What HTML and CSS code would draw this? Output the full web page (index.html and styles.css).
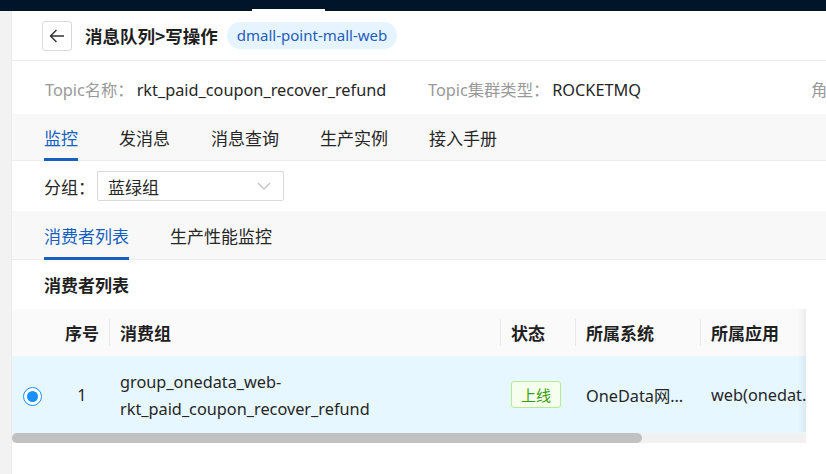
FILE: index.html
```html
<!DOCTYPE html>
<html lang="zh-CN">
<head>
<meta charset="utf-8">
<title>消息队列</title>
<link rel="stylesheet" href="styles.css">
</head>
<body>
<div class="topbar"><span class="topbar-notch"></span></div>
<div class="layout">
  <aside class="side"></aside>
  <main class="main">
    <header class="header">
      <button class="back" aria-label="返回">
        <svg width="16" height="14" viewBox="0 0 16 14"><path d="M15 7H1.5M7.5 1L1.5 7l6 6" fill="none" stroke="#333" stroke-width="1.4"/></svg>
      </button>
      <h1 class="title">消息队列&gt;写操作</h1>
      <span class="app-tag">dmall-point-mall-web</span>
    </header>
    <section class="info">
      <span class="info-item"><span class="label">Topic名称：</span><span class="value">rkt_paid_coupon_recover_refund</span></span>
      <span class="info-item"><span class="label">Topic集群类型：</span><span class="value">ROCKETMQ</span></span>
      <span class="info-item"><span class="label">角色：</span><span class="value">负责人</span></span>
    </section>
    <nav class="tabs">
      <span class="tab active">监控</span>
      <span class="tab">发消息</span>
      <span class="tab">消息查询</span>
      <span class="tab">生产实例</span>
      <span class="tab">接入手册</span>
    </nav>
    <div class="group-row">
      <span class="group-label">分组：</span>
      <div class="select">
        <span>蓝绿组</span>
        <svg width="14" height="8" viewBox="0 0 14 8"><path d="M1 1l6 6 6-6" fill="none" stroke="#bfbfbf" stroke-width="1.2"/></svg>
      </div>
    </div>
    <nav class="tabs sub">
      <span class="tab active">消费者列表</span>
      <span class="tab">生产性能监控</span>
    </nav>
    <h2 class="section-title">消费者列表</h2>
    <div class="table-wrap">
      <table class="table">
        <colgroup>
          <col style="width:43px"><col style="width:54px"><col style="width:391px"><col style="width:75px"><col style="width:125px"><col style="width:130px">
        </colgroup>
        <thead>
          <tr>
            <th></th>
            <th class="center">序号</th>
            <th class="sep">消费组</th>
            <th class="sep">状态</th>
            <th class="sep">所属系统</th>
            <th class="sep">所属应用</th>
          </tr>
        </thead>
        <tbody>
          <tr class="selected">
            <td class="center"><span class="radio"></span></td>
            <td class="center">1</td>
            <td class="group">group_onedata_web-<br>rkt_paid_coupon_recover_refund</td>
            <td><span class="status">上线</span></td>
            <td><span class="ellipsis sys">OneData网关服务</span></td>
            <td><span class="ellipsis app">web(onedata-web)</span></td>
          </tr>
        </tbody>
      </table>
      <div class="scrollbar"><div class="thumb"></div></div>
    </div>
  </main>
</div>
</body>
</html>
```
FILE: styles.css
```css
* { box-sizing: border-box; }
html, body { margin: 0; padding: 0; }
body {
  width: 826px;
  height: 474px;
  overflow: hidden;
  background: #fff;
  font-family: "Noto Sans", "Noto Sans CJK SC", sans-serif;
  color: #262626;
  font-size: 16px;
}
.topbar {
  height: 11px;
  background: #001529;
  display: flex;
  align-items: flex-end;
}
.topbar-notch {
  margin-left: 252px;
  width: 73px;
  height: 2px;
  background: #fff;
}
.layout {
  display: flex;
  height: 463px;
}
.side {
  width: 12px;
  flex: none;
  background: #f2f2f2;
  border-right: 1px solid #ebebeb;
}
.main {
  flex: 1;
  min-width: 0;
  display: flex;
  flex-direction: column;
  overflow: hidden;
}
.header {
  height: 50px;
  display: flex;
  align-items: center;
  padding-left: 30px;
  border-bottom: 1px solid #e8e8e8;
}
.back {
  width: 30px;
  height: 30px;
  border: 1px solid #d9d9d9;
  border-radius: 3px;
  background: #fff;
  display: flex;
  align-items: center;
  justify-content: center;
  padding: 0;
  margin-right: 14px;
}
.title {
  margin: 0;
  font-family: "Noto Sans CJK SC", sans-serif;
  font-size: 17.5px;
  font-weight: 700;
  color: #1f1f1f;
  margin-right: 9px;
  margin-left: -1px;
}
.app-tag {
  height: 27px;
  line-height: 27px;
  padding: 0 10px;
  border-radius: 14px;
  background: #e6f4ff;
  color: #1f5eb8;
  font-size: 15px;
}
.info {
  height: 53px;
  display: grid;
  grid-template-columns: 383px 383px 383px;
  align-items: center;
  padding-left: 33px;
  padding-top: 2px;
  white-space: nowrap;
  font-size: 16.3px;
}
.label { color: #999; }
.value { color: #262626; margin-left: 3px; }
.tabs {
  height: 47px;
  background: #f8f8f8;
  border-bottom: 1px solid #ebebeb;
  display: flex;
  align-items: stretch;
  padding-left: 32px;
  gap: 41px;
}
.tab {
  font-family: "Noto Sans CJK SC", sans-serif;
  font-size: 17px;
  display: flex;
  align-items: center;
  color: #262626;
  border-bottom: 3px solid transparent;
  margin-bottom: -1px;
  padding-top: 2px;
}
.tab.active {
  color: #1760bf;
  border-bottom-color: #1760bf;
}
.tabs.sub { height: 49px; }
.group-row {
  height: 50px;
  display: flex;
  align-items: center;
  padding-left: 32px;
}
.group-label {
  font-family: "Noto Sans CJK SC", sans-serif;
  font-size: 17px;
  margin-right: 2px;
}
.select {
  width: 187px;
  height: 30px;
  border: 1px solid #d9d9d9;
  border-radius: 2px;
  display: flex;
  align-items: center;
  justify-content: space-between;
  padding: 0 12px 0 10px;
  font-family: "Noto Sans CJK SC", sans-serif;
  font-size: 17px;
}
.section-title {
  margin: 0;
  height: 49px;
  display: flex;
  align-items: center;
  padding-left: 32px;
  font-family: "Noto Sans CJK SC", sans-serif;
  font-size: 17px;
  font-weight: 700;
  color: #1f1f1f;
}
.table-wrap {
  width: 794px;
  overflow: hidden;
  position: relative;
}
.table-wrap::after {
  content: "";
  position: absolute;
  top: 0;
  right: 0;
  width: 8px;
  height: 123px;
  background: linear-gradient(to right, rgba(0,0,0,0), rgba(0,0,0,0.06));
}
.table {
  border-collapse: collapse;
  table-layout: fixed;
  width: 818px;
}
.table th {
  height: 47px;
  background: #fafafa;
  text-align: left;
  font-family: "Noto Sans CJK SC", sans-serif;
  font-size: 17px;
  font-weight: 700;
  color: #1f1f1f;
  padding: 0 11px;
  position: relative;
}
.table th.sep::before {
  content: "";
  position: absolute;
  left: 0;
  top: 10px;
  height: 27px;
  width: 1px;
  background: #e8e8e8;
}
.table .center { text-align: center; padding: 0; }
.table td {
  height: 77px;
  background: #e6f7ff;
  padding: 0 11px;
  white-space: nowrap;
  font-size: 16.3px;
  color: #262626;
}
.table td.group { line-height: 27px; padding-top: 2px; }
.radio {
  display: inline-block;
  width: 19px;
  height: 19px;
  border: 1px solid #1890ff;
  border-radius: 50%;
  background: #fff;
  position: relative;
  vertical-align: middle;
  margin-left: -2px;
}
.radio::after {
  content: "";
  position: absolute;
  left: 3px;
  top: 3px;
  width: 11px;
  height: 11px;
  border-radius: 50%;
  background: #1890ff;
}
.status {
  display: inline-block;
  height: 27px;
  line-height: 25px;
  padding: 0 9px;
  border: 1px solid #b7eb8f;
  border-radius: 3px;
  background: #f6ffed;
  color: #389e0d;
  font-family: "Noto Sans CJK SC", sans-serif;
  font-size: 15px;
}
.ellipsis {
  display: block;
  overflow: hidden;
  text-overflow: ellipsis;
  white-space: nowrap;
}
.sys { width: 100px; }
.scrollbar {
  height: 10px;
  background: #f1f1f1;
}
.thumb {
  width: 630px;
  height: 10px;
  background: #c1c1c1;
  border-radius: 5px;
}
```
